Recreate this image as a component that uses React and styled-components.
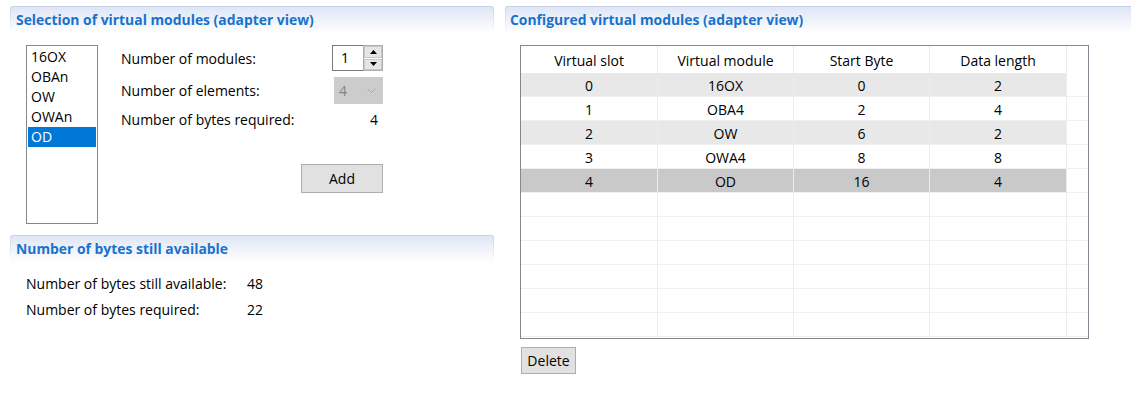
import React from "react";
import styled, { createGlobalStyle } from "styled-components";

const Global = createGlobalStyle`
  html, body { margin: 0; padding: 0; background: #fff; }
  body { font-family: "Open Sans", "Noto Sans", sans-serif; font-size: 14px; color: #000; }
  * { box-sizing: border-box; }
`;

const Page = styled.div`
  display: flex;
  align-items: flex-start;
  width: 1131px;
  height: 398px;
  overflow: hidden;
  padding-top: 6px;
`;

const LeftColumn = styled.div`
  width: 484px;
  margin-left: 10px;
  display: flex;
  flex-direction: column;
`;

const RightColumn = styled.div`
  flex: 1;
  margin-left: 11px;
  margin-right: -6px;
  display: flex;
  flex-direction: column;
`;

const HeaderFrame = styled.div`
  padding: 1px 1px 0;
  border-radius: 3px 3px 0 0;
  background: linear-gradient(to bottom, #c4d2e9 0%, #d9e3f2 40%, rgba(255,255,255,0) 100%);
`;

const HeaderInner = styled.div`
  height: 26px;
  border-radius: 2px 2px 0 0;
  background: linear-gradient(to bottom, #dfe6f4 0%, #edf1f9 45%, #ffffff 100%);
  display: flex;
  align-items: center;
  padding-left: ${p => p.$indent || 5}px;
  padding-bottom: 1px;
  font-weight: 700;
  font-size: 13.9px;
  color: #1872cd;
  white-space: nowrap;
`;

const SectionHeader = ({ children, indent }) => (
  <HeaderFrame>
    <HeaderInner $indent={indent}>{children}</HeaderInner>
  </HeaderFrame>
);

const SelectionBody = styled.div`
  display: flex;
  padding: 12px 0 11px 16px;
`;

const ListBox = styled.div`
  width: 72px;
  height: 179px;
  border: 1px solid #828790;
  padding: 1px;
  display: flex;
  flex-direction: column;
`;

const ListItem = styled.div`
  height: 20px;
  line-height: 20px;
  padding-left: 3px;
  background: ${p => (p.$selected ? "#0078d7" : "transparent")};
  color: ${p => (p.$selected ? "#fff" : "#000")};
  white-space: nowrap;
`;

const Form = styled.div`
  margin-left: 23px;
  width: 262px;
  display: grid;
  grid-template-columns: 1fr auto;
  grid-template-rows: 26px 27px 18px;
  row-gap: 6px;
  align-items: center;
  align-content: start;
`;

const Label = styled.div`
  white-space: nowrap;
`;

const Value = styled.div`
  justify-self: ${p => p.$align || "end"};
  padding-right: ${p => p.$pr || 0}px;
`;

const SpinBox = styled.div`
  display: flex;
  height: 26px;
  width: 51px;
  justify-self: end;
`;

const SpinInput = styled.div`
  width: 31px;
  height: 26px;
  border: 1px solid #7a7a7a;
  border-right: none;
  padding-left: 8px;
  line-height: 24px;
  background: #fff;
`;

const SpinButtons = styled.div`
  width: 20px;
  height: 26px;
  border: 1px solid #adadad;
  display: flex;
  flex-direction: column;
  gap: 1px;
  background: #fff;
`;

const SpinButton = styled.div`
  flex: 1;
  background: #e5e5e5;
  border: 1px solid #c8c8c8;
  display: flex;
  align-items: center;
  justify-content: center;
`;

const Combo = styled.div`
  justify-self: end;
  width: 49px;
  height: 27px;
  background: #cccccc;
  border: 1px solid #cccccc;
  display: flex;
  align-items: center;
  justify-content: space-between;
  padding: 0 6px 0 4px;
  color: #838383;
`;

const AddRow = styled.div`
  grid-column: 1 / span 2;
  justify-self: end;
  margin-top: 30px;
`;

const Button = styled.button`
  font-family: inherit;
  font-size: 14px;
  color: #000;
  background: #e1e1e1;
  border: 1px solid #adadad;
  width: ${p => p.$w}px;
  height: ${p => p.$h}px;
  padding: 0;
  cursor: default;
`;

const AvailBody = styled.div`
  padding: 8px 0 0 16px;
  display: grid;
  grid-template-columns: 221px auto;
  grid-auto-rows: 26px;
  align-items: center;
`;

const TableBox = styled.div`
  margin: 12px 0 0 15px;
  width: 569px;
  height: 294px;
  border: 1px solid #828790;
  overflow: hidden;
`;

const Row = styled.div`
  display: grid;
  grid-template-columns: 137px 136px 136px 137px 1fr;
  height: ${p => (p.$head ? 27 : 24)}px;
  border-bottom: ${p => (p.$head ? "none" : "1px solid #f0f0f0")};
`;

const Cell = styled.div`
  display: flex;
  align-items: center;
  justify-content: center;
  border-right: 1px solid #ececec;
  background: ${p => p.$bg || "transparent"};
  white-space: nowrap;
  padding-top: 1px;
`;

const Filler = styled.div``;

const DeleteWrap = styled.div`
  margin: 8px 0 0 16px;
`;

const modules = ["16OX", "OBAn", "OW", "OWAn", "OD"];
const rows = [
  ["0", "16OX", "0", "2"],
  ["1", "OBA4", "2", "4"],
  ["2", "OW", "6", "2"],
  ["3", "OWA4", "8", "8"],
  ["4", "OD", "16", "4"],
];

const rowBg = i => (i === 4 ? "#c9c9c9" : i % 2 === 0 ? "#e8e8e8" : "transparent");

export default function App() {
  return (
    <>
      <Global />
      <Page>
        <LeftColumn>
          <SectionHeader>Selection of virtual modules (adapter view)</SectionHeader>
          <SelectionBody>
            <ListBox>
              {modules.map(m => (
                <ListItem key={m} $selected={m === "OD"}>{m}</ListItem>
              ))}
            </ListBox>
            <Form>
              <Label>Number of modules:</Label>
              <SpinBox>
                <SpinInput>1</SpinInput>
                <SpinButtons>
                  <SpinButton>
                    <svg width="7" height="4" viewBox="0 0 7 4"><polygon points="0,4 7,4 3.5,0" fill="#000" /></svg>
                  </SpinButton>
                  <SpinButton>
                    <svg width="7" height="4" viewBox="0 0 7 4"><polygon points="0,0 7,0 3.5,4" fill="#000" /></svg>
                  </SpinButton>
                </SpinButtons>
              </SpinBox>
              <Label>Number of elements:</Label>
              <Combo>
                <span>4</span>
                <svg width="9" height="5" viewBox="0 0 9 5"><polyline points="0.5,0.5 4.5,4.5 8.5,0.5" fill="none" stroke="#a8a8a8" strokeWidth="1" /></svg>
              </Combo>
              <Label>Number of bytes required:</Label>
              <Value $pr={5}>4</Value>
              <AddRow>
                <Button $w={82} $h={29}>Add</Button>
              </AddRow>
            </Form>
          </SelectionBody>
          <SectionHeader>Number of bytes still available</SectionHeader>
          <AvailBody>
            <Label>Number of bytes still available:</Label>
            <Value $align="start">48</Value>
            <Label>Number of bytes required:</Label>
            <Value $align="start">22</Value>
          </AvailBody>
        </LeftColumn>
        <RightColumn>
          <SectionHeader indent={4}>Configured virtual modules (adapter view)</SectionHeader>
          <TableBox>
            <Row $head>
              {["Virtual slot", "Virtual module", "Start Byte", "Data length"].map(h => (
                <Cell key={h}>{h}</Cell>
              ))}
              <Filler />
            </Row>
            {rows.map((r, i) => (
              <Row key={i}>
                {r.map((c, j) => (
                  <Cell key={j} $bg={rowBg(i)}>{c}</Cell>
                ))}
                <Filler />
              </Row>
            ))}
            {Array.from({ length: 6 }).map((_, i) => (
              <Row key={"e" + i}>
                <Cell /><Cell /><Cell /><Cell /><Filler />
              </Row>
            ))}
          </TableBox>
          <DeleteWrap>
            <Button $w={55} $h={27}>Delete</Button>
          </DeleteWrap>
        </RightColumn>
      </Page>
    </>
  );
}
